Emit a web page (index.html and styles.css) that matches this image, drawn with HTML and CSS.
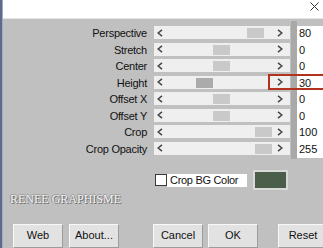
FILE: index.html
```html
<!DOCTYPE html>
<html>
  <head>
    <title>Perspective</title>
    <link rel="stylesheet" href="styles.css">
  </head>
  <body>
    <div class="frame">
      <div class="edge"></div>
      <div class="main">
        <div class="titlebar">
          <svg class="close" width="9" height="9" viewBox="0 0 9 9"><path d="M0.5 0.5 L8.5 8.5 M8.5 0.5 L0.5 8.5" stroke="#333" stroke-width="1" fill="none"/></svg>
        </div>
        <div class="panel">
          <div class="params">
            <div class="sep"></div>

            <div class="label">Perspective</div>
            <div class="track"><svg class="arr" width="6" height="8" viewBox="0 0 6 8"><path d="M5 0.8 L1.2 4 L5 7.2" stroke="#4a4a4a" stroke-width="1.6" fill="none"/></svg><div class="thumb" style="left: 93px"></div><svg class="arr" width="6" height="8" viewBox="0 0 6 8"><path d="M1 0.8 L4.8 4 L1 7.2" stroke="#4a4a4a" stroke-width="1.6" fill="none"/></svg></div>
            <div class="value">80</div>

            <div class="label">Stretch</div>
            <div class="track"><svg class="arr" width="6" height="8" viewBox="0 0 6 8"><path d="M5 0.8 L1.2 4 L5 7.2" stroke="#4a4a4a" stroke-width="1.6" fill="none"/></svg><div class="thumb" style="left: 59px"></div><svg class="arr" width="6" height="8" viewBox="0 0 6 8"><path d="M1 0.8 L4.8 4 L1 7.2" stroke="#4a4a4a" stroke-width="1.6" fill="none"/></svg></div>
            <div class="value">0</div>

            <div class="label">Center</div>
            <div class="track"><svg class="arr" width="6" height="8" viewBox="0 0 6 8"><path d="M5 0.8 L1.2 4 L5 7.2" stroke="#4a4a4a" stroke-width="1.6" fill="none"/></svg><div class="thumb" style="left: 59px"></div><svg class="arr" width="6" height="8" viewBox="0 0 6 8"><path d="M1 0.8 L4.8 4 L1 7.2" stroke="#4a4a4a" stroke-width="1.6" fill="none"/></svg></div>
            <div class="value">0</div>

            <div class="label">Height</div>
            <div class="track"><svg class="arr" width="6" height="8" viewBox="0 0 6 8"><path d="M5 0.8 L1.2 4 L5 7.2" stroke="#4a4a4a" stroke-width="1.6" fill="none"/></svg><div class="thumb active" style="left: 42px"></div><svg class="arr" width="6" height="8" viewBox="0 0 6 8"><path d="M1 0.8 L4.8 4 L1 7.2" stroke="#4a4a4a" stroke-width="1.6" fill="none"/></svg></div>
            <div class="value">30</div>

            <div class="label">Offset X</div>
            <div class="track"><svg class="arr" width="6" height="8" viewBox="0 0 6 8"><path d="M5 0.8 L1.2 4 L5 7.2" stroke="#4a4a4a" stroke-width="1.6" fill="none"/></svg><div class="thumb" style="left: 59px"></div><svg class="arr" width="6" height="8" viewBox="0 0 6 8"><path d="M1 0.8 L4.8 4 L1 7.2" stroke="#4a4a4a" stroke-width="1.6" fill="none"/></svg></div>
            <div class="value">0</div>

            <div class="label">Offset Y</div>
            <div class="track"><svg class="arr" width="6" height="8" viewBox="0 0 6 8"><path d="M5 0.8 L1.2 4 L5 7.2" stroke="#4a4a4a" stroke-width="1.6" fill="none"/></svg><div class="thumb" style="left: 59px"></div><svg class="arr" width="6" height="8" viewBox="0 0 6 8"><path d="M1 0.8 L4.8 4 L1 7.2" stroke="#4a4a4a" stroke-width="1.6" fill="none"/></svg></div>
            <div class="value">0</div>

            <div class="label">Crop</div>
            <div class="track"><svg class="arr" width="6" height="8" viewBox="0 0 6 8"><path d="M5 0.8 L1.2 4 L5 7.2" stroke="#4a4a4a" stroke-width="1.6" fill="none"/></svg><div class="thumb" style="left: 101px"></div><svg class="arr" width="6" height="8" viewBox="0 0 6 8"><path d="M1 0.8 L4.8 4 L1 7.2" stroke="#4a4a4a" stroke-width="1.6" fill="none"/></svg></div>
            <div class="value">100</div>

            <div class="label">Crop Opacity</div>
            <div class="track"><svg class="arr" width="6" height="8" viewBox="0 0 6 8"><path d="M5 0.8 L1.2 4 L5 7.2" stroke="#4a4a4a" stroke-width="1.6" fill="none"/></svg><div class="thumb" style="left: 101px"></div><svg class="arr" width="6" height="8" viewBox="0 0 6 8"><path d="M1 0.8 L4.8 4 L1 7.2" stroke="#4a4a4a" stroke-width="1.6" fill="none"/></svg></div>
            <div class="value">255</div>

            <div class="highlight"></div>
          </div>

          <div class="bgrow">
            <span class="check"></span>
            <span class="checklabel">Crop BG Color</span>
            <span class="swatch"></span>
          </div>

          <div class="brand">RENEE GRAPHISME</div>

          <div class="buttons">
            <button class="btn">Web</button>
            <button class="btn">About...</button>
            <button class="btn push">Cancel</button>
            <button class="btn">OK</button>
            <button class="btn reset">Reset</button>
          </div>
        </div>
      </div>
    </div>
  </body>
</html>
```
FILE: styles.css
```css
html,
body {
  margin: 0;
  padding: 0;
  overflow: hidden;
}
body {
  width: 323px;
  height: 248px;
  font-family: "Liberation Sans", Arial, sans-serif;
  font-size: 11px;
  color: #111;
  background: #c0c0c0;
}
.frame {
  display: flex;
  height: 248px;
}
.edge {
  width: 3px;
  flex: none;
  background: linear-gradient(to right, #5c6b8a 0, #5c6b8a 2px, #a3acc0 2px);
}
.main {
  flex: 1;
  display: flex;
  flex-direction: column;
  min-width: 0;
}
.titlebar {
  height: 21px;
  background: #fff;
  border-bottom: 1px solid #e4e4e4;
  display: flex;
  justify-content: flex-end;
  align-items: flex-start;
  padding-right: 4px;
}
.close {
  margin-top: 2px;
}
.panel {
  flex: 1;
  background: #c0c0c0;
}
.params {
  position: relative;
  display: grid;
  grid-template-columns: 144px 143px 7px 26px;
  grid-template-rows: repeat(8, 16.5px);
  padding-top: 7px;
}
.label {
  grid-column: 1;
  text-align: right;
  line-height: 13px;
  letter-spacing: -0.25px;
  padding-top: 1px;
}
.track {
  grid-column: 2;
  margin-left: 7px;
  position: relative;
  height: 13px;
  background: #efefef;
  display: flex;
  align-items: center;
  justify-content: space-between;
  padding: 0 7px 0 3px;
}
.thumb {
  position: absolute;
  top: 2px;
  width: 17px;
  height: 10px;
  background: #c9c9c9;
}
.thumb.active {
  background: #ababab;
}
.sep {
  grid-column: 3;
  grid-row: 1 / span 8;
  margin-top: -5px;
  margin-bottom: -1px;
  width: 6px;
  background: #a9a9a9;
  justify-self: end;
}
.value {
  grid-column: 4;
  background: #fff;
  padding-left: 2px;
  line-height: 14px;
  color: #111;
}
.highlight {
  position: absolute;
  left: 265px;
  top: 55px;
  width: 60px;
  height: 12px;
  border: 2px solid #b0321f;
}
.bgrow {
  display: flex;
  align-items: center;
  margin: 12px 0 0 152px;
  height: 20px;
}
.check {
  width: 10px;
  height: 10px;
  background: #fff;
  border: 1px solid #3a3a3a;
}
.checklabel {
  background: #fff;
  width: 77px;
  height: 13px;
  line-height: 13px;
  padding-left: 3px;
  letter-spacing: -0.3px;
}
.swatch {
  margin-left: 6px;
  width: 31px;
  height: 16px;
  background: #4b5e4a;
  border: 2px solid #d9d9d9;
}
.brand {
  margin: 3px 0 0 7px;
  font-family: "Liberation Serif", "Times New Roman", serif;
  font-size: 12px;
  line-height: 12px;
  color: #f6f6f6;
  text-shadow: 1px 1px 0 #6e6e6e, -1px 0 0 #8c8c8c, 0 -1px 0 #9a9a9a;
}
.buttons {
  display: flex;
  margin: 19px 0 0 10px;
}
.btn {
  width: 50px;
  height: 24px;
  padding: 0 0 2px;
  margin: 0 6px 0 0;
  font-family: "Liberation Sans", Arial, sans-serif;
  font-size: 11px;
  color: #111;
  background: #e2e2e2;
  border: 1px solid;
  border-color: #f8f8f8 #9c9c9c #9c9c9c #f8f8f8;
  flex: none;
}
.btn.push {
  margin-left: 28px;
  margin-right: 5px;
}
.btn.reset {
  margin-left: 14px;
}
```
